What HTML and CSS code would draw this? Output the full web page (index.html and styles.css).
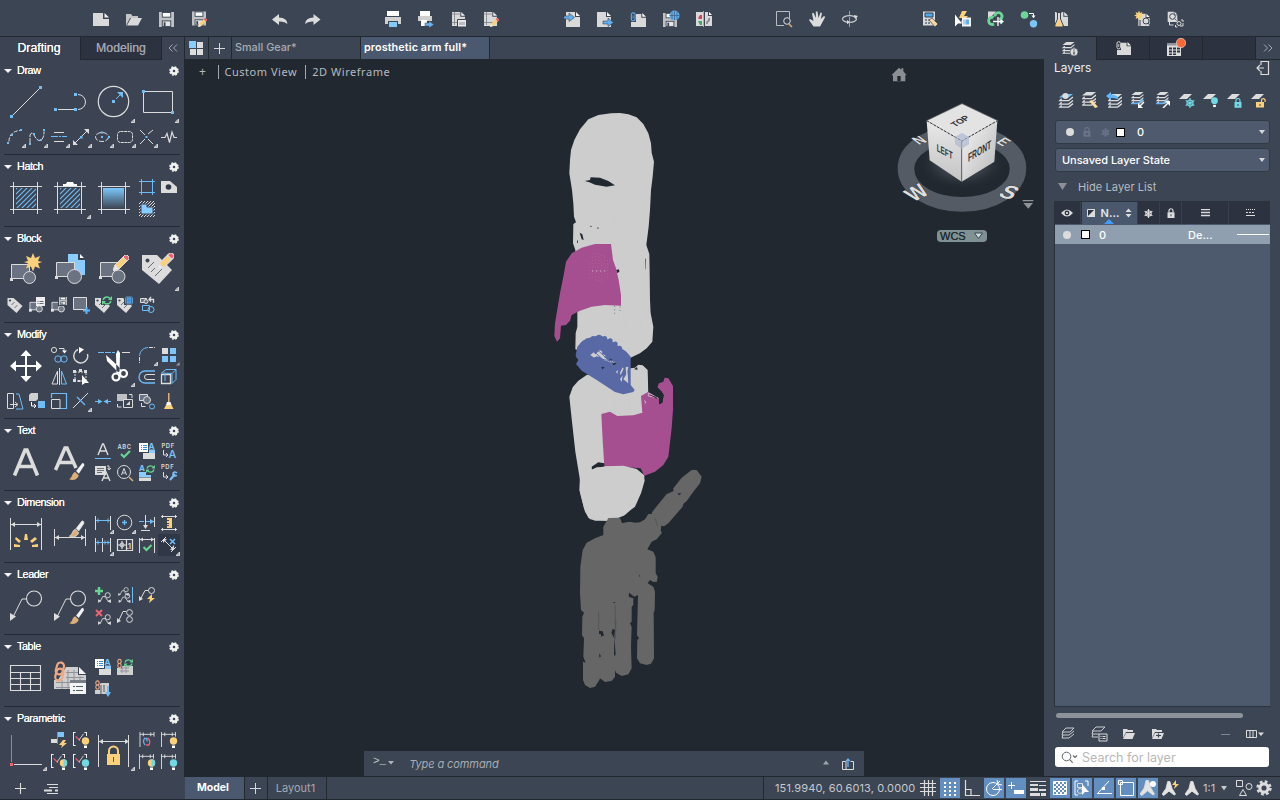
FILE: index.html
```html
<!DOCTYPE html>
<html lang="en">
<head>
<meta charset="utf-8">
<title>prosthetic arm full</title>
<link rel="stylesheet" href="styles.css">
</head>
<body>
<svg class="defs" width="0" height="0">
  <defs>
    <linearGradient id="fade" x1="0" y1="0" x2="0" y2="1"><stop offset="0" stop-color="#7cc8fc"/><stop offset="1" stop-color="#3f4857"/></linearGradient>
    <linearGradient id="faceL" x1="0" y1="0" x2="0" y2="1"><stop offset="0" stop-color="#e8e8e8"/><stop offset="1" stop-color="#c4c4c4"/></linearGradient>
    <linearGradient id="faceR" x1="0" y1="0" x2="1" y2="1"><stop offset="0" stop-color="#f4f4f4"/><stop offset="1" stop-color="#b8b8b8"/></linearGradient>
    <radialGradient id="shade"><stop offset="0" stop-color="#596069"/><stop offset=".55" stop-color="#3a414a" stop-opacity=".8"/><stop offset="1" stop-color="#212830" stop-opacity="0"/></radialGradient>
    <pattern id="hatch" width="5" height="5" patternUnits="userSpaceOnUse"><path d="M-1 6L6 -1M-1 1L1 -1M4 6L6 4" stroke="#70bdf5" stroke-width="1.1"/></pattern>
    <pattern id="dots" width="3" height="3" patternUnits="userSpaceOnUse"><path d="M0 3L3 0" stroke="#dcdcdc" stroke-width="1"/></pattern>
    <pattern id="check" width="4" height="4" patternUnits="userSpaceOnUse"><path d="M0 0h2v2h-2zM2 2h2v2h-2z" fill="#fff"/></pattern>
    <symbol id="gear" viewBox="0 0 10 10"><circle cx="5" cy="5" r="2.6" fill="none" stroke="#f2f2f2" stroke-width="2.6"/><circle cx="5" cy="5" r="4.1" fill="none" stroke="#f2f2f2" stroke-width="1.5" stroke-dasharray="1.9 1.32"/></symbol>
    <symbol id="tri" viewBox="0 0 4 4"><path d="M0 3.6h3.6V0z" fill="#9a9ea5"/></symbol>
    <symbol id="doc" viewBox="0 0 16 16"><path d="M0 2h11v4h5v10H0z" fill="#d9d9d9"/><path d="M12 1l4 4h-4z" fill="#f4f4f4"/></symbol>
    <symbol id="page" viewBox="0 0 14 16"><path d="M0 1h9v5h5v10H0z" fill="#d9d9d9"/><path d="M10 1l4 4h-4z" fill="#f4f4f4"/></symbol>
    <symbol id="floppy" viewBox="0 0 16 16"><path d="M0 0h16v16H0z" fill="#c0c1c4"/><path d="M3 0h10v6H3z" fill="#3b4554"/><path d="M4 1h8v4H4z" fill="#fff"/><path d="M3 9h10v7H3z" fill="#3b4554"/><path d="M4 10h8v5H4z" fill="#e6e6e6"/><path d="M5 11h2v4H5z" fill="#3b4554"/></symbol>
    <symbol id="pencil" viewBox="0 0 16 16"><path d="M0 16l2-6 8-8 4 4-8 8z" fill="#fbd07a"/><path d="M0 16l2-6 4 4z" fill="#e9e9e9"/><path d="M10 2l2-2h2l2 2v2l-2 2z" fill="#ee6470"/></symbol>
    <symbol id="brush" viewBox="0 0 18 20"><path d="M0 19c4-1 3-7 7-8l4 4c-2 5-7 6-11 4z" fill="#dcae78"/><path d="M8 10l7-9 2 1v2l-6 9z" fill="#f2f2f2"/></symbol>
    <symbol id="tag" viewBox="0 0 16 16"><path d="M1 1h6l9 8-6 7-9-8z" fill="#dcdcdc"/><circle cx="3.5" cy="3.5" r="1.1" fill="#3c4454"/><path d="M5 8l3-3M8 11l3-3" stroke="#6a6f78"/></symbol>
    <symbol id="block" viewBox="0 0 16 12"><path d="M1 1h9v8H1z" fill="#6b7382" stroke="#dcdcdc"/><circle cx="11" cy="8" r="3.3" fill="#737b89" stroke="#dcdcdc"/><path d="M0 8h3v3H0z" fill="#e6e6e6"/></symbol>
    <symbol id="stack" viewBox="0 0 16 16"><path d="M5 0h11l-5 4H0z"/><path d="M3 5.5L1 7.500h10l5-4M3 9.500l-2 2h10l5-4M3 13l-2 2h10l5-4" fill="none" stroke-width="1.5" stroke="#dcdcdc"/></symbol>
    <symbol id="sync" viewBox="0 0 10 9"><path d="M1 4q1-3 4-3 2 0 3 1.500M9 5q-1 3-4 3-2 0-3-1.500" fill="none" stroke="#67d490" stroke-width="1.4"/><path d="M6 4h4V0zM4 5H0v4z" fill="#67d490"/></symbol>
    <symbol id="bulbY" viewBox="0 0 8 12"><circle cx="4" cy="4" r="3.7" fill="#fbd07a"/><path d="M2.500 8.500h3v2.500h-3z" fill="#fff"/></symbol>
    <symbol id="bulbC" viewBox="0 0 8 12"><circle cx="4" cy="4" r="3.7" fill="#72d9e4"/><path d="M2.500 8.500h3v2.500h-3z" fill="#fff"/></symbol>
    <symbol id="bulbH" viewBox="0 0 8 12"><circle cx="4" cy="4" r="3.7" fill="#fbd07a"/><path d="M4 .3a3.700 3.700 0 0 1 0 7.400z" fill="#72d9e4"/><path d="M2.500 8.500h3v2.500h-3z" fill="#fff"/></symbol>
    <symbol id="dim" viewBox="0 0 16 16"><path d="M.5 0v16M15.500 0v5M.5 2.500h15M4 .5v4M12 .5v4" fill="none" stroke="#dcdcdc"/></symbol>
    <symbol id="geo" viewBox="0 0 16 16"><path d="M3 .5H.5v15H3M13 .5h2.500v4" fill="none" stroke="#f0f0f0" stroke-width="1.200"/><path d="M3 5l5 5" stroke="#ee6470" stroke-width="1.300"/><path d="M7 9l5-7" stroke="#dcdcdc"/></symbol>
    <symbol id="chain" viewBox="0 0 6 12"><rect x="1" y="1" width="4" height="5" rx="2" fill="none" stroke="#f0a882" stroke-width="1.300"/><rect x="1" y="6" width="4" height="5" rx="2" fill="none" stroke="#f0a882" stroke-width="1.300"/></symbol>
    <symbol id="lead" viewBox="0 0 32 32"><path d="M3 27L12 9h5" fill="none" stroke="#dcdcdc"/><circle cx="24" cy="8.500" r="7.500" fill="none" stroke="#dcdcdc" stroke-width="1.100"/><path d="M0 31v-8l6 3.500z" fill="#dcdcdc"/></symbol>
    <symbol id="leads" viewBox="0 0 14 12"><path d="M2 11L5 5h3M8 6l4 5" fill="none" stroke="#dcdcdc"/><circle cx="10.500" cy="3.500" r="2.800" fill="none" stroke="#dcdcdc"/><path d="M0 12V8l3 1.500zM10 10l4 2V8z" fill="#dcdcdc"/></symbol>
    <symbol id="txtlist" viewBox="0 0 16 16"><path d="M0 0h9v9H0z" fill="#fff"/><path d="M2 2.500h1m1 0h4M2 4.500h1m1 0h4M2 6.500h1m1 0h4" stroke="#3d8fdb"/><path d="M4 10h12v6H4z" fill="#dcdcdc"/><path d="M4 10h12v-3.500H10V10z" fill="#8accff"/></symbol>
    <symbol id="flake" viewBox="0 0 10 10"><path d="M5 0v10M.7 2.500l8.600 5M.7 7.500l8.600-5" stroke="currentColor" stroke-width="1.200"/><circle cx="5" cy="5" r="3" fill="none" stroke="currentColor" stroke-width="1.200"/></symbol>
    <symbol id="lock" viewBox="0 0 8 10"><path d="M2 4V2.500a2 2 0 0 1 4 0V4" fill="none" stroke="currentColor" stroke-width="1.200"/><path d="M.5 4h7v5.800h-7z" fill="currentColor"/><path d="M3.500 6h1v2h-1z" fill="#3b4554"/></symbol>
    <symbol id="folder" viewBox="0 0 14 12"><path d="M1 10V1h4l1 1h5v2H4z" fill="#dcdcdc"/><path d="M4 5h9l-2.500 6H1z" fill="#dcdcdc"/></symbol>
    <symbol id="annot" viewBox="0 0 16 16"><path d="M6.500 0h2.500l2.500 8 4 6.500-1.500 1L8 11l-6 5-2-1.500L4.500 8z" fill="#e4e4e4"/></symbol>
    <symbol id="attach" viewBox="0 0 6 12"><rect x="1" y="1" width="4.500" height="9.500" rx="2" fill="none" stroke="currentColor" stroke-width="1.300"/><path d="M3.200 4v4" stroke="currentColor"/></symbol>
  </defs>
</svg>

<div class="app">
<header class="toolbar">
  <div class="group">
    <svg viewBox="0 0 33 36"><path d="M9 13h10v6h6v7H9z" fill="#d9d9d9"/><path d="M20.500 13l4.500 4.500h-4.500z" fill="#f4f4f4"/></svg>
    <svg viewBox="0 0 33 36"><path d="M9 25V14h5l1.500 2H21v2h-8l-4 8z" fill="#c4c5c7"/><path d="M14 18h11l-4 7.500H10z" fill="#dadada"/></svg>
    <svg viewBox="0 0 33 36"><use href="#floppy" x="9" y="12" width="15" height="15"/></svg>
    <svg viewBox="0 0 33 36"><use href="#floppy" x="9" y="11" width="14" height="15"/><use href="#pencil" x="15" y="18" width="9" height="9"/></svg>
  </div>
  <div class="group">
    <svg viewBox="0 0 33 36"><path d="M9 19.500l7-5.500v3.500q8 0 8.500 6.500-3-3-8.500-2.500V25z" fill="#dcdcdc"/></svg>
    <svg viewBox="0 0 33 36"><path d="M24.500 19.500l-7-5.500v3.500q-8 0-8.500 6.500 3-3 8.500-2.500V25z" fill="#dcdcdc"/></svg>
  </div>
  <div class="group">
    <svg viewBox="0 0 33 36"><path d="M11 11h12v5H11z" fill="#fff"/><path d="M9 17h16v7H9z" fill="#d0d0d0"/><path d="M12 21h10v6H12z" fill="#3b4554"/><path d="M13 22h8v5h-8z" fill="#85c8fb"/></svg>
    <svg viewBox="0 0 33 36"><path d="M11 11h10v5H11z" fill="#fff"/><path d="M9 16h14v5H9z" fill="#cfcfcf"/><path d="M12 20h6v6h-6z" fill="#fff"/><path d="M16 23h4v-2l5 3.500-5 3.500v-2h-4z" fill="#68b3f2" stroke="#3b4554" stroke-width=".5"/></svg>
    <svg viewBox="0 0 33 36"><use href="#page" x="10" y="11" width="13" height="15"/><path d="M12.500 12v13M10 22.500h10M10 14h8" stroke="#8c9097"/><path d="M15.500 19.500h9v7.500h-9z" fill="#e7e7e7" stroke="#3b4554"/><path d="M18 22v3m2-3v3m2-3v3" stroke="#8c9097"/></svg>
    <svg viewBox="0 0 33 36"><use href="#page" x="9" y="11" width="13" height="15"/><path d="M11.500 12v13M9 22.500h10M9 14h8" stroke="#8c9097"/><use href="#pencil" x="15" y="18" width="9" height="9"/></svg>
  </div>
  <div class="group">
    <svg viewBox="0 0 33 36"><use href="#page" x="11" y="11" width="14" height="16"/><path d="M9 16h5v-3l5.500 4.500-5.500 4V19H9z" fill="#62aeee" stroke="#3b4554" stroke-width=".6"/></svg>
    <svg viewBox="0 0 33 36"><use href="#page" x="9" y="11" width="14" height="16"/><path d="M15 21h5v-3l5.500 4.500-5.500 4V24h-5z" fill="#62aeee" stroke="#3b4554" stroke-width=".6"/></svg>
    <svg viewBox="0 0 33 36"><use href="#doc" x="10" y="12" width="15" height="15"/><path d="M8 11h7v11H8z" fill="#3b4554"/><use href="#attach" x="9" y="12" width="6" height="10" color="#62aeee"/></svg>
    <svg viewBox="0 0 33 36"><use href="#floppy" x="9" y="13" width="14" height="14"/><circle cx="20.500" cy="15.500" r="5" fill="#62aeee"/><path d="M15.500 15.500h10M20.500 11v9M18 11.500v8M23 11.500v8" stroke="#3b5d80" stroke-width=".7"/></svg>
    <svg viewBox="0 0 33 36"><path d="M9 12h7v14H9zM18 12h3v4h4v10h-7z" fill="#d9d9d9"/><path d="M22 12l3 3h-3z" fill="#fff"/><path d="M11 18l2-3h2v4h-3z" fill="#d94056"/><path d="M11 21h4v4h-2z" fill="#41a965"/><path d="M16.500 11v16" stroke="#70bdf5"/><path d="M20 24c-1-4 3-1 2-6" stroke="#858991" stroke-width="1.800" fill="none"/></svg>
  </div>
  <div class="group">
    <svg viewBox="0 0 33 36"><path d="M22.500 18v-6.500h-13v14H17" fill="none" stroke="#b9bdc2"/><circle cx="20" cy="21" r="3.300" fill="none" stroke="#dcdcdc"/><path d="M22 24l3 3" stroke="#dcae78" stroke-width="1.500"/></svg>
    <svg viewBox="0 0 33 36"><path d="M13.500 26.500L9 20l1-1 3.500 2L12 13.500l1.500-.7L16 18l-.2-6.500h1.700L18.500 18l2-5.500 1.500.5-1.200 6 3.200-3 1.200 1L22 23l-2 3.500z" fill="#dcdcdc"/></svg>
    <svg viewBox="0 0 33 36"><ellipse cx="16.500" cy="19" rx="7" ry="3.300" fill="none" stroke="#c9cbce" stroke-width="1.200"/><path d="M16.500 11v4m0 2v10" stroke="#62aeee"/><path d="M21 15l4 1-3 3zM14 20l3 2.300-3 2z" fill="#dcdcdc"/></svg>
  </div>
  <div class="group">
    <svg viewBox="0 0 33 36"><path d="M9 11.500h12v14H9z" fill="#d9d9d9"/><path d="M11 13h8v4h-8z" fill="#51a9ee" stroke="#334150"/><path d="M11 20h2m1 0h2m-5 3h2m1 0h2" stroke="#626974" stroke-width="1.500"/><path d="M15 20l3-2 6 6-3 3z" fill="#f3d6a4" stroke="#3b4554" stroke-width=".7"/></svg>
    <svg viewBox="0 0 33 36"><path d="M15 11l-3 7h4l-3 6 8-8h-4l3-5z" fill="#fbd07a"/><path d="M8 14.500v12l3-3h4z" fill="#fff"/><path d="M15 17.500h9v9h-9z" fill="#f4f4f4"/><path d="M16.500 19.500h1v5h-1zM18.500 19.500H22v5h-3.500z" fill="#62aeee"/></svg>
    <svg viewBox="0 0 33 36"><path d="M8 11.500h8l-8 9z" fill="#d9d9d9"/><path d="M15 16.500a3.500 3.500 0 1 1 5.500 2.500 3.200 3.200 0 0 1 0 4.500M13.500 17.500a3.600 3.600 0 1 0 .5 6.500" stroke="#6fd596" stroke-width="2.800" fill="none"/><path d="M13 21.500h8M18 17v9" stroke="#fff" stroke-width="1.300"/><path d="M20.500 19l3.500 2.500-3.500 2.500z" fill="#fff"/></svg>
    <svg viewBox="0 0 33 36"><circle cx="11.500" cy="15" r="3.800" fill="#6fd596"/><circle cx="20.500" cy="23.800" r="3.700" fill="#7cc4fa"/><path d="M16 13.500h4.500v3" stroke="#fff" fill="none"/><path d="M18.500 15.500h4l-2 2.800z" fill="#fff"/></svg>
    <svg viewBox="0 0 33 36"><use href="#page" x="9" y="11" width="13" height="15"/><path d="M10.500 12.500h5M11.500 13v6L8.500 26h9L14.500 19v-6" fill="#d9d9d9" stroke="#3b4554"/><path d="M12 19.500h2l2.700 7H9.300z" fill="#fbd07a"/></svg>
  </div>
  <div class="group">
    <svg viewBox="0 0 33 36"><use href="#page" x="12" y="13" width="12" height="13"/><path d="M13 10.500l1 2.500 2.500-1-1 2.500 2.500 1-2.500 1 1 2.500-2.500-1-1 2.500-1-2.500-2.500 1 1-2.500-2.500-1 2.500-1-1-2.500 2.500 1z" fill="#fbd07a"/><circle cx="20" cy="21" r="3" fill="#d9d9d9" stroke="#3b4554"/><path d="M22 23l3 4M14 20v6" stroke="#3b4554"/></svg>
    <svg viewBox="0 0 33 36"><use href="#page" x="8" y="11" width="11" height="11"/><circle cx="13.500" cy="16.500" r="2.800" fill="#ddd" stroke="#3b4554"/><path d="M16 19l2 2" stroke="#3b4554"/><path d="M10.500 22v3h4M21 26h3v-3M16.500 22v-2h2M22 20h2v2M16.500 25v2h2" stroke="#dcdcdc" fill="none"/><circle cx="20" cy="23.500" r="2" fill="none" stroke="#dcdcdc"/></svg>
  </div>
</header>

<div class="main">
<aside class="palette">
  <nav class="ptabs"><span class="ptab on">Drafting</span><span class="ptab">Modeling</span><span class="fold"><svg width="12" height="10" viewBox="0 0 12 10"><path d="M5.500 1.500L2 5l3.500 3.500M10 1.500L6.500 5 10 8.500" fill="none" stroke="#a3a8b0"/></svg></span></nav>

  <section class="tools tall">
    <h3>Draw<svg class="cog"><use href="#gear"/></svg></h3>
    <div class="grid">
      <svg class="big w" viewBox="0 0 44 44"><path d="M8 36L36 8"/><path class="q" d="M6 35h3v3H6zM35 6h3v3h-3z"/></svg>
      <svg class="big w" viewBox="0 0 44 44"><path d="M10 29.500h16M30 14.500a7.500 7.500 0 0 1 0 15"/><path class="q" d="M6 28h3v3H6zM26 28h3v3h-3zM26 13h3v3h-3z"/></svg>
      <svg class="big w" viewBox="0 0 44 44"><circle cx="21.500" cy="21.500" r="15.200" stroke-width="1.200"/><path class="q" d="M20 20h3v3h-3zM31 12v6l-6-6z"/><path class="b" d="M24 19l4-4"/><use href="#tri" x="39" y="39" width="4" height="4"/></svg>
      <svg class="big w" viewBox="0 0 44 44"><path d="M7.500 11.500h29v21h-29z"/><path class="q" d="M6 10h3v3H6zM35 31h3v3h-3z"/><use href="#tri" x="39" y="39" width="4" height="4"/></svg>
      <svg class="w" viewBox="0 0 22 22"><path d="M5 15.500C5 9 9 5 16 4.500" stroke-dasharray="4 1.500"/><path class="q" d="M3 16h2v2H3zM7 8h2v2H7zM16 3h2v2h-2z"/><use href="#tri" x="18" y="18" width="4" height="4"/></svg>
      <svg class="w" viewBox="0 0 22 22"><path d="M4 17V9q2-4 4 0 3 6 6 5.500 4-1 4-9" stroke-dasharray="5 1"/><path class="q" d="M3 17h2v2H3zM7 7h2v2H7zM14 13h2v2h-2zM17 3h2v2h-2z"/><use href="#tri" x="18" y="18" width="4" height="4"/></svg>
      <svg class="w" viewBox="0 0 22 22"><path d="M6 6.500h10M6 15.500h10"/><path class="b" d="M3 10.500h7m1 0h2m1 0h5"/><use href="#tri" x="18" y="18" width="4" height="4"/></svg>
      <svg class="w" viewBox="0 0 22 22"><path d="M5 17L17 5"/><path class="f" d="M3 19v-5l5 5zM14 3h5v5z"/><path class="q" d="M10 10h2.500v2.500H10z"/><use href="#tri" x="18" y="18" width="4" height="4"/></svg>
      <svg class="w" viewBox="0 0 22 22"><ellipse cx="10" cy="11" rx="6.500" ry="4.500" stroke-dasharray="5 1.500"/><path class="q" d="M9 5.500h2v2H9zM9 10h2v2H9zM16 10h2v2h-2z"/><use href="#tri" x="18" y="18" width="4" height="4"/></svg>
      <svg class="w" viewBox="0 0 22 22"><rect x="3.500" y="5.500" width="15" height="11" rx="3" stroke-dasharray="3 .6"/><use href="#tri" x="18" y="18" width="4" height="4"/></svg>
      <svg class="w" viewBox="0 0 22 22"><path d="M4 4l5 5m3-1l5-4M9 13l-5 5m8-5l5 5"/><path class="q" d="M9.500 10h2v2h-2z"/><use href="#tri" x="18" y="18" width="4" height="4"/></svg>
      <svg class="w" viewBox="0 0 22 22"><path d="M3 11.500h4l2-4 2.500 9L14 6l2 5.500h3" stroke-width="1.200"/></svg>
    </div>
  </section>

  <section class="tools">
    <h3>Hatch<svg class="cog"><use href="#gear"/></svg></h3>
    <div class="grid">
      <svg class="big w" viewBox="0 0 44 44"><path d="M9.500 6v32M33.500 6v32M6 10.500h32M6 33.500h32"/><path d="M12 12h20v20H12z" fill="url(#hatch)" stroke="none"/></svg>
      <svg class="big w" viewBox="0 0 44 44"><path d="M9.500 6v32M33.500 6v32M6 10.500h32M6 33.500h32"/><path d="M12 12h20v20H12z" fill="url(#hatch)" stroke="none"/><path class="s" d="M15 10V8h3l1-2h6l1 2h3v2z"/><use href="#tri" x="39" y="39" width="4" height="4"/></svg>
      <svg class="big w" viewBox="0 0 44 44"><path d="M9.500 6v32M33.500 6v32M6 10.500h32M6 33.500h32"/><path d="M11 12h21v20H11z" fill="url(#fade)" stroke="none"/></svg>
      <svg class="b" viewBox="0 0 22 22"><path d="M5.500 3v16M16.500 3v16M3 5.500h16M3 16.500h16"/></svg>
      <svg class="w" viewBox="0 0 22 22"><path class="f" d="M3 5h9l7 6v6H3z"/><circle cx="10.500" cy="11" r="2.800" fill="#303847" stroke="none"/></svg>
      <svg class="w" viewBox="0 0 22 22"><path d="M3 3h16v16H3z" fill="url(#dots)" stroke="none"/><path d="M5 6h6v3h6v7H5z" fill="#8accff" stroke="#3c4454"/></svg>
    </div>
  </section>

  <section class="tools tall">
    <h3>Block<svg class="cog"><use href="#gear"/></svg></h3>
    <div class="grid">
      <svg class="big w" viewBox="0 0 44 44"><path class="g" d="M7.500 16.500h18v14h-18z"/><circle class="g" cx="25.500" cy="29.500" r="6"/><path class="f" d="M6 30h3v3H6z"/><path class="y" d="M29 5l2 5 5-2-2 5 4 1-4 1.500 2 5-5-2-2 5-2-5-5 2 2-5-4-1.500 4-1-2-5 5 2z"/></svg>
      <svg class="big w" viewBox="0 0 44 44"><path fill="#8accff" stroke="none" d="M20 6h10v6h7v15H20z"/><path class="s" d="M32 6l4 4h-4z"/><path class="g" d="M8.500 14.500h18v14h-18z"/><circle class="g" cx="26.500" cy="28.500" r="7"/><path class="f" d="M7 28h3v3H7z"/></svg>
      <svg class="big w" viewBox="0 0 44 44"><path class="g" d="M8.500 14.500h18v14h-18z"/><circle class="g" cx="26.500" cy="28.500" r="6.500"/><path class="f" d="M7 28h3v3H7z"/><use href="#pencil" x="21" y="7" width="16" height="16"/></svg>
      <svg class="big w" viewBox="0 0 44 44"><path class="f" d="M6 7h15l15 15-13 14L6 22z"/><circle cx="11.500" cy="12.500" r="2" fill="#3c4454" stroke="none"/><path d="M12 20l6-6M15 24l4-4M19 28l9-9" stroke="#666c77"/><use href="#pencil" x="21" y="5" width="17" height="17"/><use href="#tri" x="39" y="39" width="4" height="4"/></svg>
      <svg viewBox="0 0 22 22"><use href="#tag" x="2" y="3" width="17" height="16"/></svg>
      <svg viewBox="0 0 22 22"><use href="#block" x="3" y="7" width="15" height="12"/><path d="M10 3h9v9h-9z" fill="#eee"/><path d="M11.500 7.500h1m1 0h4m-6 2h1m1 0h4" stroke="#636b79"/></svg>
      <svg viewBox="0 0 22 22"><use href="#block" x="3" y="7" width="15" height="12"/><path d="M10 2h10v10H10z" fill="#3c4454"/><use href="#floppy" x="11" y="3" width="8" height="8"/></svg>
      <svg class="w" viewBox="0 0 22 22"><path class="g" d="M3.500 3.500h13v12h-13z"/><path d="M16.500 13v7M13 16.500h7" stroke="#60b5f8" stroke-width="2"/></svg>
      <svg viewBox="0 0 22 22"><use href="#tag" x="2" y="3" width="16" height="16"/><path d="M9 2h11v9H9z" fill="#3c4454"/><use href="#sync" x="10" y="2" width="10" height="9"/></svg>
      <svg viewBox="0 0 22 22"><use href="#tag" x="2" y="3" width="16" height="16"/><path d="M10 2h10v9H10z" fill="#3c4454"/><path d="M13 4h4v5h-4zM11.500 3.500v6M18.500 3.500v6M12 3h6M12 10h6" fill="#3d8fdb" stroke="#62aeee" stroke-width=".8"/></svg>
      <svg class="w" viewBox="0 0 22 22"><path class="g" d="M4.500 4.500h6v4h-6z"/><circle class="g" cx="10" cy="7.500" r="2"/><path d="M13 5.500h4.500V9M15 3l-2 2.500 2 2" stroke-width="1.300"/><path class="b" d="M6.500 11.500h7v5h-7z"/><circle class="b" cx="15" cy="15.500" r="3"/></svg>
    </div>
  </section>

  <section class="tools tall">
    <h3>Modify<svg class="cog"><use href="#gear"/></svg></h3>
    <div class="grid">
      <svg class="big w" viewBox="0 0 44 44"><path d="M22 10v24M10 22h24" stroke="#fff" stroke-width="2"/><path class="s" d="M22 6l5.500 6h-11zM22 38l5.500-6h-11zM6 22l6-5.500v11zM38 22l-6-5.500v11z"/></svg>
      <svg class="w" viewBox="0 0 22 22"><circle cx="6" cy="6" r="2.600"/><path d="M11 4.500h5v3"/><path class="s" d="M14 6.500h5l-2.500 3z"/><circle class="b" cx="10" cy="15" r="3.200"/><circle class="b" cx="16" cy="15" r="3.200"/></svg>
      <svg class="w" viewBox="0 0 22 22"><path d="M8 5.500A7 7 0 1 0 17.500 10" stroke-width="1.400"/><path class="s" d="M9 3l5 2.500-5 4z"/></svg>
      <svg class="big w" viewBox="0 0 44 44"><path class="b" d="M6 8.500h6m1 0h6m1 0h3"/><path d="M30 8.500h8"/><path class="s" d="M14 11l1 6 11 11 4-1-5-6zM24 10l2-4 2 3-.5 20-3 1z"/><circle cx="24" cy="33" r="3.500" stroke="#fff" stroke-width="2.200"/><circle cx="31.500" cy="29.500" r="3.500" stroke="#fff" stroke-width="2.200"/><use href="#tri" x="39" y="39" width="4" height="4"/></svg>
      <svg class="w" viewBox="0 0 22 22"><path class="b" d="M3.500 12C4 7 7 4 12 3.500"/><path d="M3.500 13v6M13 3.500h6" stroke-dasharray="4 1"/><use href="#tri" x="18" y="18" width="4" height="4"/></svg>
      <svg viewBox="0 0 22 22"><path d="M4 4h6v6H4z" fill="#dcdcdc"/><path d="M12 4h6v6h-6zM4 12h6v6H4zM12 12h6v6h-6z" fill="#7cc4fa"/><use href="#tri" x="18" y="18" width="4" height="4"/></svg>
      <svg class="w" viewBox="0 0 22 22"><path d="M9.500 5v13H4zM11.500 2v17" /><path class="b" d="M13.500 5v13h5z"/></svg>
      <svg class="w" viewBox="0 0 22 22"><path d="M5 6h11v9H5z" stroke-dasharray="2 1"/><path class="f" d="M3 4h3v3H3zM9 3h3v3H9zM14 4h3v3h-3zM3 13h3v3H3zM8 14h2v2H8z"/><path class="s" d="M12 9v10l3-2h4z"/></svg>
      <svg class="b" viewBox="0 0 22 22"><path d="M19 5H9a6 6 0 0 0 0 12h10" stroke-width="1.300"/><path stroke="#dcdcdc" d="M19 8.500h-8a2.500 2.500 0 0 0 0 5h8"/></svg>
      <svg class="b" viewBox="0 0 22 22"><path stroke="#dcdcdc" stroke-width="1.300" d="M3.500 8.500h9v9h-9z"/><path d="M3.500 7L8 3.500h10L14 7.500zM14 7.500v10l4-4v-10M7 15V8"/></svg>
      <svg class="w" viewBox="0 0 22 22"><path d="M3.500 3.500h6v15h-6zM6 14.500h7M11 12l3 2.500-3 2.500"/><path class="b" d="M12 4h3l4 15h-7"/></svg>
      <svg viewBox="0 0 22 22"><path d="M3 5l2-2h7v6l-2 2H3z" fill="#d0d0d0"/><path d="M5.500 12v4h4M8 14l2 2-2 2" stroke="#fff" fill="none"/><path d="M12 11h7v7h-7z" fill="#70bdf5"/></svg>
      <svg class="b" viewBox="0 0 22 22"><path stroke-width="1.200" d="M3.500 8V3.500h15v15H12"/><path stroke="#dcdcdc" d="M3.500 9.500h8.500v9H3.500z"/></svg>
      <svg class="w" viewBox="0 0 22 22"><path d="M3 18L18 3"/><path class="b" d="M7 7l8 8" stroke-width="1.300"/><use href="#tri" x="18" y="18" width="4" height="4"/></svg>
      <svg class="b" viewBox="0 0 22 22"><path d="M3 11.500h4M14 11.500h5"/><path class="q" d="M6 9l4.500 2.500L6 14zM16 9l-4.500 2.500L16 14z"/></svg>
      <svg class="w" viewBox="0 0 22 22"><path d="M3 4h10v7H3z" fill="#c0c1c4" stroke="none"/><path d="M9.500 9.500h9v8h-9z" fill="#3c4454"/><path d="M15 4.500h3V8M3.500 14v3h4"/><path class="f" d="M12 15l4-4v4z"/></svg>
      <svg class="w" viewBox="0 0 22 22"><path class="g" d="M3.500 4.500h8v6h-8z"/><circle class="g" cx="11" cy="10" r="3.500"/><path d="M5.500 13v3.500h4"/><circle class="b" cx="16" cy="16.500" r="2.500"/></svg>
      <svg viewBox="0 0 22 22"><path d="M10 3h1.500v9H10z" fill="#dcae78"/><path d="M9 12h3.500l1 3h-5.500z" fill="#f4f4f4"/><path d="M8 15h5.500l2 4h-9.500z" fill="#fbd07a"/></svg>
    </div>
  </section>

  <section class="tools">
    <h3>Text<svg class="cog"><use href="#gear"/></svg></h3>
    <div class="grid">
      <svg class="big" viewBox="0 0 44 44"><path d="M10.500 35.500L21 10h2l10.500 25.500M14 26.500h16" fill="none" stroke="#dcdcdc" stroke-width="3.600"/></svg>
      <svg class="big" viewBox="0 0 44 44"><path d="M7.500 30L17 8h2l9 20M11.500 22.500h14" fill="none" stroke="#dcdcdc" stroke-width="3.500"/><use href="#brush" x="19" y="22" width="20" height="18"/></svg>
      <svg class="w" viewBox="0 0 22 22"><path d="M6 15L10.500 4h1L16 15M7.500 11h7" stroke-width="1.400"/><path class="b" d="M3 18.500h16"/></svg>
      <svg class="w" viewBox="0 0 22 22"><text x="3.500" y="8.500" class="mini">ABC</text><path d="M7 14l3 3 6-6" stroke="#67d490" stroke-width="2.200"/></svg>
      <svg viewBox="0 0 22 22"><use href="#txtlist" x="3" y="3" width="16" height="16"/><text x="12.500" y="9" class="ab">A</text></svg>
      <svg class="w" viewBox="0 0 22 22"><text x="3.500" y="7.500" class="mini">PDF</text><path d="M5.500 10v5h4M8 13l2 2-2 2"/><text x="10.500" y="18" class="ab lg">A</text></svg>
      <svg class="w" viewBox="0 0 22 22"><path class="f" d="M3 4h11v9H3z"/><path d="M5 6.500h7M5 8.500h7M5 10.500h5" stroke="#6a6f78"/><path d="M15 4h2v3M15.500 6l1.500 2 2-2"/><path d="M10 19l4-9 4 9M11.500 16h5" stroke-width="1.400"/></svg>
      <svg class="w" viewBox="0 0 22 22"><circle cx="10" cy="10" r="6.500"/><path d="M7.500 13L10 6.500 12.500 13M8.500 11h3"/><path d="M15 15l4 4" stroke="#dcae78" stroke-width="1.600"/></svg>
      <svg viewBox="0 0 22 22"><text x="3" y="9" class="ab">A</text><use href="#sync" x="10" y="3" width="9" height="8"/><path d="M3 10h7v3h5v2H3z" fill="#8accff"/><path d="M3 15.500h12v3.500H3z" fill="#dcdcdc"/></svg>
      <svg class="w" viewBox="0 0 22 22"><text x="3" y="7" class="mini">PDF</text><path d="M5.500 10v5h4M8 13l2 2-2 2"/><path d="M12 18l5-6" stroke="#7cc4fa" stroke-width="2"/><circle cx="17" cy="12" r="2" stroke="#7cc4fa" stroke-width="1.500" stroke-dasharray="9.500 3" stroke-dashoffset="-1"/></svg>
    </div>
  </section>

  <section class="tools">
    <h3>Dimension<svg class="cog"><use href="#gear"/></svg></h3>
    <div class="grid">
      <svg class="big w" viewBox="0 0 44 44"><path d="M6.500 6v32M37.500 6v32M7 12.500h30"/><path class="f" d="M7 12.500l4-2.500v5zM37 12.500l-4-2.500v5z"/><path class="y" d="M21 22h2l1 6h-4zM12 25l5 4-2 2-4-4zM31 25l-5 4 2 2 5-4zM10 32l6 1v2h-6zM34 32l-6 1v2h6z"/></svg>
      <svg class="big w" viewBox="0 0 44 44"><path d="M6.500 17v17M37.500 17v17M7 25.500h30"/><path class="f" d="M7 25.500l4-2.500v5zM37 25.500l-4-2.500v5z"/><use href="#brush" x="19" y="8" width="20" height="17"/></svg>
      <svg class="w" viewBox="0 0 22 22"><path d="M3.500 4v14M18.500 4v14"/><path class="b" d="M4 8.500h14M6 6.500v4M16 6.500v4"/><use href="#tri" x="18" y="18" width="4" height="4"/></svg>
      <svg class="w" viewBox="0 0 22 22"><circle cx="10.500" cy="10.500" r="7.300"/><path class="b" d="M8 10.500h5M10.500 8v5" stroke-width="1.400"/><use href="#tri" x="18" y="18" width="4" height="4"/></svg>
      <svg class="w" viewBox="0 0 22 22"><path d="M9.500 3v13M5 18.500h9M18.500 5v10"/><path class="f" d="M7 13h5l-2.500 4z"/><path class="b" d="M3 9.500h5m2 0h8"/><path class="q" d="M14 7l4 2.500-4 2.500z"/></svg>
      <svg class="w" viewBox="0 0 22 22"><path d="M3 4.500h16M3 17.500h16M4.500 3v3M17.500 3v3M4.500 16v3M17.500 16v3"/><path class="y" d="M9 6h5v10H9v-2h2v-1H9v-1h2v-1H9V9h2V8H9z"/></svg>
      <svg class="w" viewBox="0 0 22 22"><path d="M3.500 4v14M18.500 4v14M10.500 4v14"/><path class="b" d="M4 8.500h14M6 6.500v4M13 6.500v4M16 6.500v4"/><use href="#tri" x="18" y="18" width="4" height="4"/></svg>
      <svg class="w" viewBox="0 0 22 22"><path d="M3.500 5.500h15v11h-15zM12.500 5v12M4 11h8M8 7v8" stroke-width="1.200"/><circle cx="8" cy="11" r="2"/><text x="12.500" y="14.500" class="mini n">.1</text></svg>
      <svg class="w" viewBox="0 0 22 22"><path d="M3.500 4v15M18.500 4v15M4 5.500h14"/><path class="f" d="M4 5.500l3-2v4zM18 5.500l-3-2v4z"/><path d="M7.500 13l3 3 5-5" stroke="#67d490" stroke-width="2"/></svg>
      <svg class="w" viewBox="0 0 22 22"><path d="M0 0h22v22H0z" fill="#303746" stroke="none"/><path d="M3 8l5-5M13 18l5-5M6 6l9 9"/><path class="f" d="M5 5h4l-4 4zM16 11v5h-4z"/><path class="b" d="M12 5l5 5M17 5l-5 5" stroke-width="1.600"/><use href="#tri" x="18" y="18" width="4" height="4"/></svg>
    </div>
  </section>

  <section class="tools">
    <h3>Leader<svg class="cog"><use href="#gear"/></svg></h3>
    <div class="grid">
      <svg class="big" viewBox="0 0 44 44"><use href="#lead" x="6" y="6" width="32" height="32"/></svg>
      <svg class="big" viewBox="0 0 44 44"><use href="#lead" x="6" y="6" width="32" height="32"/><use href="#brush" x="19" y="23" width="20" height="17"/></svg>
      <svg viewBox="0 0 22 22"><path d="M3 7h8M7 3v8" stroke="#67d490" stroke-width="2.400"/><use href="#leads" x="6" y="8" width="13" height="11"/></svg>
      <svg viewBox="0 0 22 22"><use href="#leads" x="3" y="3" width="13" height="9"/><use href="#leads" x="4" y="9" width="13" height="10"/><path d="M18.500 3v16" stroke="#70bdf5"/></svg>
      <svg class="w" viewBox="0 0 22 22"><path d="M5 14L9 6.500h3"/><path class="f" d="M3 17v-5l4 3z"/><circle cx="15.500" cy="6.500" r="3"/><path d="M16 10l-5 5h3l-1 4 6-5h-3z" fill="#fbd07a" stroke="none"/></svg>
      <span></span>
      <svg viewBox="0 0 22 22"><path d="M4 4l6 6M10 4l-6 6" stroke="#ee6470" stroke-width="2"/><use href="#leads" x="6" y="8" width="13" height="11"/></svg>
      <svg class="w" viewBox="0 0 22 22"><path d="M5 14L9 5.500h3"/><path class="f" d="M3 17v-5l4 3z"/><circle cx="15.500" cy="6.500" r="2.900"/><circle cx="15.500" cy="13.500" r="2.900"/></svg>
    </div>
  </section>

  <section class="tools">
    <h3>Table<svg class="cog"><use href="#gear"/></svg></h3>
    <div class="grid">
      <svg class="big w" viewBox="0 0 44 44"><path d="M6.500 9.500h30v25h-30zM6 16.500h31M6 22.500h31M6 28.500h31M16.500 16v18M26.500 16v18" stroke-width="1.100"/></svg>
      <svg class="big" viewBox="0 0 44 44"><path d="M6 24h4l8-13h12v8h8v14H6z" fill="#cfcfcf"/><path d="M31 11l7 7h-7z" fill="#f4f4f4"/><path d="M8 26.500h28M8 31.500h28M18 16.500h12M18 21.500h18M14 24v9M20 14v19M26 14v12M32 20v6" stroke="#8f9399"/><rect x="8.500" y="6.500" width="7" height="12" rx="3.500" fill="none" stroke="#f0a882" stroke-width="2.200" transform="rotate(15 12 12)"/><rect x="8" y="12.500" width="7" height="12" rx="3.500" fill="none" stroke="#f0a882" stroke-width="2.200" transform="rotate(15 11 18)"/><path d="M22 24h16v14H22z" fill="#f4f4f4"/><path d="M22 24h16v3H22z" fill="#777c85"/><path d="M25 30.500h2m1 0h7M25 34.500h2m1 0h7" stroke="#515a68"/></svg>
      <svg viewBox="0 0 22 22"><use href="#txtlist" x="3" y="3" width="16" height="16"/><text x="12.500" y="9" class="ab">A</text></svg>
      <svg viewBox="0 0 22 22"><path d="M3 10h16v9H3z" fill="#cfcfcf"/><path d="M6 12h9M6 15h9M8 10v7M12 10v7" stroke="#8f9399"/><path d="M3 3h5v9H3z" fill="#3c4454"/><use href="#chain" x="3" y="2" width="5" height="11"/><use href="#sync" x="10" y="3" width="9" height="8"/></svg>
      <span></span><span></span>
      <svg viewBox="0 0 22 22"><path d="M3 10l6-5h8v11H3z" fill="#cfcfcf"/><path d="M9 7v9M12 7v7" stroke="#8f9399" stroke-width="2"/><path d="M2 2h6v10H2z" fill="#3c4454"/><use href="#chain" x="3" y="2" width="5" height="10"/><path d="M15 8h2v6h2l-3 5-3-5h2z" fill="#70bdf5"/></svg>
    </div>
  </section>

  <section class="tools last">
    <h3>Parametric<svg class="cog"><use href="#gear"/></svg></h3>
    <div class="grid">
      <svg class="big w" viewBox="0 0 44 44"><path d="M7.500 7v27" stroke="#e8646e"/><path d="M6 35h3v3H6z" fill="#ee6470" stroke="none"/><path d="M10 36.500h28"/><use href="#tri" x="39" y="39" width="4" height="4"/></svg>
      <svg viewBox="0 0 22 22"><path d="M3 11h6v4H3z" fill="#dcdcdc"/><path d="M10 4h6v5h-6z" fill="#7cc4fa"/><path d="M9.500 4v12" stroke="#ee6470"/><path d="M15 12l-4 5h3l-1 3 6-5h-3l2-3z" fill="#fbd07a"/></svg>
      <svg viewBox="0 0 22 22"><use href="#geo" x="3" y="4" width="14" height="14"/><use href="#bulbY" x="11" y="9" width="9" height="12"/></svg>
      <svg class="big w" viewBox="0 0 44 44"><path d="M6.500 7v32M36.500 7v32M7 13.500h30"/><path class="f" d="M7 13.500l4-2.500v5zM37 13.500l-4-2.500v5z"/><path d="M17 26v-3a4.500 4.500 0 0 1 9 0v3" stroke="#fbd07a" stroke-width="2"/><path class="y" d="M15 26h13v11H15z"/><path d="M21.500 29v5" stroke="#6b5a30"/><use href="#tri" x="39" y="39" width="4" height="4"/></svg>
      <svg viewBox="0 0 22 22"><use href="#dim" x="3" y="4" width="16" height="15"/><path d="M9 17q-3-4 0-7M8 10.500h3v3" fill="none" stroke="#62aeee" stroke-width="1.300"/><path d="M12 10q3 3 1 7h-3" stroke="#ee6470" stroke-width="1.300" fill="none"/></svg>
      <svg viewBox="0 0 22 22"><use href="#dim" x="3" y="4" width="15" height="15"/><use href="#bulbY" x="11" y="9" width="9" height="12"/></svg>
      <svg viewBox="0 0 22 22"><use href="#geo" x="3" y="4" width="14" height="14"/><use href="#bulbH" x="11" y="9" width="9" height="12"/></svg>
      <svg viewBox="0 0 22 22"><use href="#geo" x="3" y="4" width="14" height="14"/><use href="#bulbC" x="11" y="9" width="9" height="12"/></svg>
      <svg viewBox="0 0 22 22"><use href="#dim" x="3" y="4" width="15" height="15"/><use href="#bulbH" x="11" y="9" width="9" height="12"/></svg>
      <svg viewBox="0 0 22 22"><use href="#dim" x="3" y="4" width="15" height="15"/><use href="#bulbC" x="11" y="9" width="9" height="12"/></svg>
    </div>
  </section>
  <footer class="pfoot"><svg width="60" height="24" viewBox="0 0 60 24"><path d="M5 13.500h11M10.500 8v11M37 9.500h11M37 18.500h11M39 12.500h9" fill="none" stroke="#dcdcdc" stroke-width="1.100"/><path d="M34 15.500h8m3 0h3" stroke="#dcdcdc" stroke-width="1.800"/></svg></footer>
</aside>

<div class="work">
  <div class="upper">
    <div class="center">
      <nav class="files">
        <span class="cell"><svg width="15" height="15" viewBox="0 0 15 15"><path d="M0 0h7v7H0z" fill="#8accff"/><path d="M8 1h6v6H8zM1 8h6v6H1zM8 8h6v6H8z" fill="#dcdcdc"/></svg></span>
        <span class="cell"><svg width="12" height="12" viewBox="0 0 12 12"><path d="M0 6.500h11M5.500 1v11" stroke="#d5d7da"/></svg></span>
        <span class="file">Small Gear*</span><span class="file on">prosthetic arm full*</span><span class="rest"></span>
      </nav>
      <div class="view">
        <div class="vlabel"><span class="plus">+</span><i></i><span>Custom View</span><i></i><span>2D Wireframe</span></div>
        <svg class="scene" viewBox="185 60 858 716">
          <g transform="translate(540 100) scale(.33333)">
            <path fill="#cdcdcd" d="M213 40L240 39 265 43 290 52 310 72 325 100 333 130 335 158 342 185 338 230 333 270 330 330 326 380 319 435 328 462 329 520 330 600 332 640 340 680 337 725 320 745 300 760 262 778 180 775 106 748 107 700 112 680 112 620 106 450 99 430 100 372 108 367 102 350 100 310 96 270 88 220 90 180 93 150 103 120 120 88 145 58 175 45z"/>
            <path fill="#212830" d="M134 243L150 240 152 232 180 233 205 243 225 256 200 260 165 254 148 247z"/>
            <path fill="#212830" d="M119 398L127 403 131 420 125 418zM111 420l3 3v6h-2zM151 377l5 2-4 3zM172 382l5 2-4 3zM315 475l2 3v30h-1zM228 510l9-2 1 8-7 3z"/>
            <path stroke="#b4b4b4" stroke-dasharray="2 9" fill="none" d="M215 345v40M225 340v45M239 345v40M263 335v50M216 240v60M235 640v40M302 655v30M160 292l10 8M250 640l12 50"/>
            <path stroke="#59545a" stroke-dasharray="3 7" stroke-width="2" fill="none" d="M224 618v30M240 620v14M332 620v20"/>
            <path fill="#cdcdcd" d="M88 890L98 862 115 842 140 825 272 805 285 803 295 794 308 796 323 810 325 880 330 950 250 965 250 1100 313 1127 305 1170 285 1215 255 1245 215 1262 165 1262 145 1253 132 1225 120 1175 120 1140 106 1055 96 965z"/>
            <path fill="#a54f90" d="M213 432L219 480 228 505 236 540 243 585 243 617 195 615 155 620 120 632 95 645 90 662 78 675 63 677 60 715 51 725 43 708 45 670 60 580 72 520 78 485 95 460 125 443 165 432z"/>
            <path fill="none" stroke="#b8709f" stroke-width="2" stroke-dasharray="3 7" d="M157 460v80M167 458v90M176 460v90M185 465v85M193 470v70M203 480v60M150 490v50"/>
            <path fill="none" stroke="#ddd" stroke-width="2" stroke-dasharray="4 8" d="M156 513h42"/>
            <path fill="#5869a6" d="M107 765L112 740 128 722 145 714 160 710 180 705 221 728 259 755 272 770 272 855 284 870 280 876 250 883 225 876 170 840 125 812 108 792 115 780 108 770z"/>
            <path fill="none" stroke="#5869a6" stroke-width="15" stroke-linecap="round" stroke-dasharray="0 18" d="M116 765L120 742 135 725 160 715 180 711 200 717 218 726 235 740 248 757 262 776"/>
            <path fill="#cdcdcd" d="M151 765l10-8 5 6 14-13 8 6-4 4 14 8-6 3 14 10 10 2 10 6-8 2-14-7-12-3-12-10-10-2-8 4zM228 815l6-5-2 12zM240 818l8-16 3 4-9 20zM257 802l8-2-6 30zM250 838l13-22 2 34zM240 838l8-12-3 20z"/>
            <path fill="#212830" d="M208 775l10 5-10 2zM214 787l16 3-9 6zM184 800l10 2-7 6zM282 808l9-7 2 8z"/>
            <path stroke="#5869a6" fill="none" stroke-width="2.500" d="M155 748l50 45M165 742l55 53M190 752l30 40M150 772l60 10"/>
          </g>
          <g transform="translate(540 360) scale(.33333)">
            <path fill="#a54f90" d="M184 162L210 155 232 168 280 166 307 158 303 108 325 95 357 115 357 133 367 128 371 105 365 95 352 82 357 70 370 65 374 53 385 55 399 78 399 150 395 205 385 290 370 315 345 335 313 347 302 325 240 320 193 320 188 240z"/>
            <path fill="none" stroke="#ddd" stroke-width="2" d="M312 122l6 4-3 5M325 99l30 15-30-6z"/>
            <path fill="#212830" d="M328 104l20 6 6 8zM155 320L175 307 193 310 194 321 170 322 156 329z"/>
            <path fill="#212830" d="M326 60l26 22 13 13 6 10-4 23-10 5v-18l-31-20z"/>
            <path fill="#cdcdcd" d="M120 350L160 327 195 319 250 317 290 327 312 345 314 362 303 400 285 440 250 467 200 482 150 478 135 455 118 390z"/>
            <path stroke="#c39abb" stroke-dasharray="1 5" d="M232 200v90M246 200v90M260 200v90M274 200v90M290 200v90" opacity=".4"/>
            <path stroke="#aaa" stroke-dasharray="1 6" d="M225 130v34M240 125v38M253 120v44M265 120v40"/>
            <path fill="#666" d="M190 525L190 500 200 483 205 474 240 473 246 490 260 487 270 485 285 488 300 487 315 478 325 462 335 462 337 455 380 402 400 394 400 385 425 353 455 330 470 330 485 350 480 370 460 395 440 423 430 432 428 440 385 490 372 499 364 497 362 512 366 518 350 538 335 545 322 568 340 575 347 592 347 640 353 650 351 665 340 666 330 660 323 670 340 680 345 695 344 750 341 758 342 895 333 911 320 915 300 910 291 895 292 840 297 835 291 825 294 705 283 710 267 698 266 710 280 715 280 735 275 740 275 785 270 790 275 800 273 860 275 925 265 943 245 948 228 938 225 930 225 950 215 963 195 966 180 955 178 960 165 980 150 984 135 975 129 960 129 905 137 908 130 890 132 835 126 825 127 770 132 758 123 750 120 700 121 620 128 570 140 548 165 535z"/>
            <path fill="#212830" d="M177 812l11 2 4 12-8 4-2-8h-5zM218 807l7 2-2 20 4 55-3 5-2-8 1-45-9-18zM178 880l5 9-5 4zM412 400h12l-6 6zM297 645l4 2-2 4zM218 726h8l-2 4z"/>
            <path stroke="#4c4f52" stroke-width="2" fill="none" d="M176 755v55M226 735v70M228 778l-2 60M345 475l8 22"/>
          </g>
          <g transform="translate(880 55) scale(.33333)">
            <path fill="#8b8e93" d="M34 61L57 38l7 6v-4h6v9l10 12h-4v18H39V61z"/><path fill="#212830" d="M52 63h10v15H52z"/>
            <ellipse cx="246" cy="340" rx="168" ry="105" fill="none" stroke="#555b64" stroke-width="50"/>
            <ellipse cx="246" cy="346" rx="142" ry="80" fill="#212830"/>
            <ellipse cx="246" cy="325" rx="135" ry="80" fill="url(#shade)"/>
            <g class="compass"><text transform="matrix(.85 -.3 .8 .6 116 270)" font-size="46">N</text><text transform="matrix(.75 .42 -.8 .5 346 262)" font-size="48">E</text><text transform="matrix(.8 -.42 .75 .7 101 442)" font-size="66">W</text><text transform="matrix(.95 .25 -.65 .75 351 424)" font-size="68">S</text></g>
            <path fill="#e3e3e3" d="M246 146L353 197 245 258 140 197z"/>
            <path fill="url(#faceL)" d="M140 197L245 258V380L149 316z"/><path fill="url(#faceR)" d="M245 258L352 197 343 320 245 380z"/>
            <path fill="none" stroke="#30343a" stroke-width="3" stroke-dasharray="8 4" d="M140 197L246 258 352 197"/><path stroke="#5d6065" stroke-width="3" d="M245 258V380"/><path stroke="#777" stroke-width="2" fill="none" d="M140 197L246 146 353 197"/>
            <path fill="#a9b6cf" opacity=".65" d="M246 233l21 13v22l-22 14-20-14v-22z"/>
            <g class="cube"><text transform="matrix(.72 -.42 .75 .5 226 217)" font-size="31">TOP</text><text transform="matrix(.66 .36 0 1.1 170 288)" font-size="29">LEFT</text><text transform="matrix(.75 -.45 0 1.3 264 321)" font-size="27">FRONT</text></g>
            <path fill="#8f9297" d="M428 435h32v4h-32zM430 444h29l-14 17z"/>
          </g>
        </svg>
        <div class="wcs">WCS<svg width="11" height="8" viewBox="0 0 11 8"><path d="M1.500 1h8L5.500 6.500z" fill="#c9dbdc" stroke="#3a4550"/></svg></div>
        <div class="cmd"><span class="prompt">&gt;_</span><svg width="7" height="5" viewBox="0 0 7 5"><path d="M0 1h6L3 4.500z" fill="#b0b4ba"/></svg><span class="hint">Type a command</span><svg class="up" width="6" height="5" viewBox="0 0 6 5"><path d="M0 4.500h6L3 .5z" fill="#a0a4ab"/></svg><svg width="14" height="14" viewBox="0 0 14 14"><path d="M4.500 4.500h-3v8h11v-8h-3M5 4v9" fill="none" stroke="#dcdcdc"/><path d="M7 10V3" stroke="#62b5fa" stroke-width="1.300"/><path d="M4.500 4L7 1l2.500 3z" fill="#62b5fa"/></svg></div>
      </div>
    </div>

    <aside class="layers">
      <nav class="ltabs">
        <span class="on"><svg width="18" height="16" viewBox="0 0 18 16"><use href="#stack" x="1" y="1" width="13" height="12" fill="#dcdcdc"/><circle cx="13" cy="11" r="4" fill="#dcdcdc" stroke="#3b4554" stroke-width=".6"/><path d="M13 8.500v1m0 1v3" stroke="#3b4554" stroke-width="1.300"/></svg></span>
        <span><svg width="18" height="16" viewBox="0 0 18 16"><use href="#doc" x="3" y="1" width="14" height="14"/><path d="M1 0h6v10H1z" fill="#2d3240"/><use href="#attach" x="2" y="1" width="5" height="9" color="#dcdcdc"/></svg></span>
        <span><svg width="20" height="20" viewBox="0 0 20 20"><path d="M1 6h14v12H1z" fill="#dcdcdc"/><path d="M1 5h14v2.500H1z" fill="#8e929a"/><path d="M3 9.500h3v2H3zM7 9.500h3v2H7zM11 9.500h3v2h-3zM3 12.500h3v2H3zM7 12.500h3v2H7zM11 12.500h3v2h-3zM3 15.500h3V17H3zM7 15.500h3V17H7z" fill="#2d3240"/><circle cx="15" cy="5" r="4.700" fill="#fa6937" stroke="#e9d9d4" stroke-width=".7"/></svg></span>
        <span></span>
        <span class="fold"><svg width="12" height="10" viewBox="0 0 12 10"><path d="M2 1.500L5.500 5 2 8.500M6.500 1.500L10 5 6.500 8.500" fill="none" stroke="#a3a8b0"/></svg></span>
      </nav>
      <div class="lbody">
        <div class="lhead"><span>Layers</span><svg width="14" height="16" viewBox="0 0 14 16"><path d="M5 5V1.500h7.500v13H5V11M1 8h7M4 5L1 8l3 3" fill="none" stroke="#dcdcdc" stroke-width="1.200"/></svg></div>
        <div class="ltools">
          <svg viewBox="0 0 16 16"><use href="#stack" x="0" y="2" width="16" height="14" fill="#70bdf5"/><circle cx="7.500" cy="4" r="3" fill="#dcdcdc"/></svg>
          <svg viewBox="0 0 16 16"><use href="#stack" x="0" y="0" width="14" height="14" fill="#dcdcdc"/><path d="M7 9l3-1 6 7-3 1z" fill="#fbd9a0"/></svg>
          <svg viewBox="0 0 16 16"><use href="#stack" x="2" y="2" width="14" height="14" fill="#dcdcdc"/><path d="M0 4l5-4v2.500q6 0 8 5-4-2-8-1.500V8z" fill="#62b5fa"/></svg>
          <svg viewBox="0 0 16 16"><use href="#stack" x="1" y="0" width="13" height="12" fill="#dcdcdc"/><path d="M1 11.500h7l5-4" fill="none" stroke="#62b5fa" stroke-width="1.500"/><path d="M14 10l-4 4" stroke="#fff" stroke-width="1.500"/><path d="M8 11v5h5z" fill="#fff"/></svg>
          <svg viewBox="0 0 16 16"><use href="#stack" x="1" y="0" width="13" height="12" fill="#dcdcdc"/><path d="M1 11.500h7l5-4" fill="none" stroke="#62b5fa" stroke-width="1.500"/><path d="M8 16l5-5" stroke="#fff" stroke-width="1.500"/><path d="M10 9h5v5z" fill="#fff"/></svg>
          <svg viewBox="0 0 16 16"><path d="M5 2h8l-5 5H0z" fill="#dcdcdc"/><use href="#flake" x="6" y="6" width="10" height="10" color="#72d9e4"/></svg>
          <svg viewBox="0 0 16 16"><path d="M5 2h8l-5 5H0z" fill="#dcdcdc"/><use href="#bulbC" x="7" y="5" width="9" height="11"/></svg>
          <svg viewBox="0 0 16 16"><path d="M5 2h8l-5 5H0z" fill="#dcdcdc"/><use href="#lock" x="7" y="6" width="8" height="10" color="#72d9e4"/></svg>
          <svg viewBox="0 0 16 16"><path d="M5 2h8l-5 5H0z" fill="#dcdcdc"/><path d="M5 10h8v5.500H5z" fill="#fbd07a"/><path d="M10.500 10V8.500a1.800 1.800 0 0 1 3.600 0V10" fill="none" stroke="#fbd07a" stroke-width="1.200"/><path d="M8.500 12h1v2h-1z" fill="#3b4554"/></svg>
        </div>
        <div class="select"><i class="dot"></i><svg class="dim" width="9" height="11"><use href="#lock" width="8" height="10"/></svg><svg class="dim" width="9" height="9"><use href="#flake" width="9" height="9"/></svg><i class="sw"></i><b>0</b><em></em></div>
        <div class="select state"><span>Unsaved Layer State</span><em></em></div>
        <div class="hide"><svg width="10" height="8" viewBox="0 0 10 8"><path d="M0 0h9L4.500 7z" fill="#8c8f94"/></svg><span>Hide Layer List</span></div>
        <div class="list">
          <div class="row head">
            <span class="c1"><svg width="12" height="8" viewBox="0 0 12 8"><path d="M0 4q6-7 12 0-6 7-12 0z" fill="#dcdcdc"/><circle cx="6" cy="4" r="2.400" fill="#2d3240"/><circle cx="6" cy="4" r="1" fill="#fff"/></svg></span>
            <span class="c2"><svg width="8" height="8" viewBox="0 0 8 8"><path d="M.5.5h7v7h-7z" fill="#2d3240" stroke="#dcdcdc"/><path d="M0 8L8 0v8z" fill="#dcdcdc"/></svg><span>N...</span><svg width="7" height="10" viewBox="0 0 7 10"><path d="M.5 4L3.500 .5l3 3.500zM.5 6h6l-3 3.500z" fill="#dcdcdc"/></svg><i></i></span>
            <span class="c3"><svg width="9" height="9" color="#dcdcdc"><use href="#flake" width="9" height="9"/></svg></span>
            <span class="c4"><svg width="9" height="11" color="#dcdcdc"><use href="#lock" width="8" height="10.500"/></svg></span>
            <span class="c5"><svg width="9" height="8" viewBox="0 0 9 8"><path d="M0 .5h9M0 3.500h9M0 6.500h9" stroke="#dcdcdc" stroke-width="1.300"/></svg></span>
            <span class="c6"><svg width="9" height="8" viewBox="0 0 9 8"><path d="M0 .5h9" stroke="#dcdcdc" stroke-dasharray="1 1"/><path d="M0 3.500h9" stroke="#dcdcdc" stroke-dasharray="2 1"/><path d="M0 6.500h9" stroke="#dcdcdc"/></svg></span>
          </div>
          <div class="row item"><i class="dot"></i><i class="sw"></i><b>0</b><b class="de">De...</b><u></u></div>
        </div>
        <div class="hbar"></div>
        <div class="lact">
          <svg width="16" height="14" viewBox="0 0 16 14"><path d="M6 1h8l-4 4H2zM3 5L2 8h7l5-4M3 8l-1 3h7l5-4" fill="none" stroke="#c9cdd0"/></svg>
          <svg width="18" height="16" viewBox="0 0 18 16"><path d="M5 1h9l-4 4H1zM2 5L1 8h7M2 8l-1 3h6" fill="none" stroke="#c9cdd0"/><path d="M8 8h8v7H8z" fill="#3b4554" stroke="#dcdcdc"/><path d="M9.500 10.500h1m1 0h3m-5 2h1m1 0h3" stroke="#dcdcdc"/></svg>
          <svg class="fo" width="14" height="12"><use href="#folder" width="14" height="12"/></svg>
          <svg width="14" height="12"><use href="#folder" width="14" height="12"/><path d="M5 7.500h5M7.500 5.500v4" stroke="#3b4554" stroke-width="1.200"/></svg>
          <svg class="minus" width="9" height="3"><path d="M0 1.500h9" stroke="#82888f"/></svg>
          <svg width="18" height="10" viewBox="0 0 18 10"><path d="M.5 1.500h10v7h-10zM4 1v8M7 1v8" fill="none" stroke="#dcdcdc"/><path d="M12 3.500h6L15 7z" fill="#dcdcdc"/></svg>
        </div>
        <div class="search"><svg width="18" height="13" viewBox="0 0 18 13"><circle cx="5.500" cy="5.500" r="4.300" fill="none" stroke="#63676c"/><path d="M8.700 8.700l3 3M12 4.500L14 6.500l2-2" fill="none" stroke="#63676c" stroke-width="1.200"/></svg><span>Search for layer</span></div>
      </div>
    </aside>
  </div>

  <footer class="status">
    <span class="stab on">Model</span><span class="stab add"><svg width="12" height="12" viewBox="0 0 12 12"><path d="M0 6.500h11M5.500 1v11" stroke="#d5d7da"/></svg></span><span class="stab lay">Layout1</span><span class="spacer"></span>
    <span class="coords">151.9940, 60.6013, 0.0000</span>
    <div class="modes w">
      <svg viewBox="0 0 20 20"><path d="M2 5.500h16M2 9.500h16M2 13.500h16M6.500 2v16M10.500 2v16M14.500 2v16" stroke-width="1.200"/></svg>
      <svg class="act" viewBox="0 0 20 20"><path d="M4 5h12M4 9h12M4 13h12M4 17h12" stroke="#fff" stroke-width="2" stroke-dasharray="2 3"/></svg>
      <svg viewBox="0 0 20 20"><path d="M3.500 2v15.500H18M4 11.500h5v6" stroke-width="1.200"/></svg>
      <svg class="act" viewBox="0 0 20 20"><circle cx="9" cy="11" r="6.500" stroke="#fff"/><path d="M9 11.500h9M8 11l8-8M13 2l1 4 4 1" stroke="#fff"/></svg>
      <svg class="act" viewBox="0 0 20 20"><path d="M5.500 4v7M2 7.500h7" stroke="#fff"/><path class="s" d="M8 12h10v4H8z"/></svg>
      <svg viewBox="0 0 20 20"><path class="f" d="M2 3h16v1H2zM2 6h8v2H2zM11 7h7v1h-7zM2 10h8v3H2zM11 11h7v2h-7zM2 15h10v3H2zM13 15h5v3h-5z"/></svg>
      <svg class="act" viewBox="0 0 20 20"><path d="M3.500 3.500h13v13h-13z" stroke="#fff"/><path d="M4 4h12v12H4z" fill="url(#check)" stroke="none"/></svg>
      <svg class="act" viewBox="0 0 20 20"><path d="M6 3H3v14h3M13 3h3v5" stroke="#fff"/><path d="M5.500 5.500h5v4h-5z"/><circle cx="8" cy="13" r="2.500"/><path class="s" d="M10 6v11l3-3h4z"/></svg>
      <svg class="act" viewBox="0 0 20 20"><path d="M3 15.500h15M4 15L15 3" stroke="#fff"/><path class="s" d="M8 9h3v3H8z"/></svg>
      <svg class="act" viewBox="0 0 20 20"><path d="M4.500 4.500h13v13h-13zM2.500 2.500h4v4h-4z" fill="#628fc0" stroke="#fff"/></svg>
      <svg class="act" viewBox="0 0 20 20"><use href="#annot" x="2" y="2" width="15" height="16"/><circle class="s" cx="15" cy="6" r="3"/></svg>
      <svg viewBox="0 0 20 20"><use href="#annot" x="2" y="3" width="14" height="15"/><path class="y" d="M16 2l-4 5h3l-1 4 5-5h-3z"/></svg>
      <svg viewBox="0 0 20 20"><use href="#annot" x="3" y="3" width="14" height="15"/></svg>
    </div>
    <span class="scale">1:1</span><svg width="7" height="5" viewBox="0 0 7 5"><path d="M0 0h6L3 4.500z" fill="#c5c8cc"/></svg>
    <svg class="shapes w" width="18" height="18" viewBox="0 0 18 18"><path d="M1.500 1.500h6v6h-6zM4.500 16.500L8 10.500l3.500 6z"/><circle cx="14" cy="7.500" r="3"/></svg>
    <svg width="16" height="16" viewBox="0 0 10 10"><circle cx="5" cy="5" r="2.600" fill="none" stroke="#dcdcdc" stroke-width="2"/><circle cx="5" cy="5" r="4" fill="none" stroke="#dcdcdc" stroke-width="1.600" stroke-dasharray="1.700 1.440"/></svg>
  </footer>
</div>
</div>
</div>
</body>
</html>
```
FILE: styles.css
```css
* { box-sizing: border-box; }
body { margin: 0; width: 1280px; height: 800px; overflow: hidden; background: #212830; color: #e4e6e8; font-family: Inter, "Liberation Sans", sans-serif; font-size: 11px; }
svg { display: block; flex: none; }
.defs { position: absolute; }
.app { display: flex; flex-direction: column; height: 800px; }

/* shared icon paint */
.w { fill: none; stroke: #dcdcdc; }
.b { fill: none; stroke: #6dbcf7; }
.q { fill: #70bdf5; stroke: none; }
.f { fill: #dcdcdc; stroke: none; }
.s { fill: #fff; stroke: none; }
.y { fill: #fbd07a; stroke: none; }
.g { fill: #6b7382; stroke: #dcdcdc; }
.mini { font: 600 5.800px Inter, sans-serif; fill: #dcdcdc; stroke: none; letter-spacing: .6px; }
.mini.n { font-size: 8px; letter-spacing: -.5px; }
.ab { font: 700 8px Inter, sans-serif; fill: #7cc4fa; stroke: none; }
.ab.lg { font-size: 11px; font-weight: 500; }

/* top toolbar */
.toolbar { height: 37px; display: flex; gap: 47px; padding-left: 84px; background: #3b4554; border-bottom: 1px solid #212830; }
.group { display: flex; }
.group:nth-child(n+6) { margin-left: 1px; }
.group:nth-child(n+7) { margin-left: 0; }
.group svg { width: 33px; height: 36px; }

.main { flex: 1; display: flex; min-height: 0; }

/* left palette */
.palette { width: 184px; display: flex; flex-direction: column; background: #3c4454; font-family: "Liberation Sans", sans-serif; }
.ptabs { height: 22px; display: flex; }
.ptab { width: 80px; height: 22px; line-height: 23px; text-align: center; font-size: 12.300px; color: #fff; padding-right: 2px; text-shadow: 0 0 .5px #fff; }
.ptab + .ptab { width: 82px; height: 23px; line-height: 22px; padding: 0; background: #2d3240; color: #a0a4ac; border: 1px solid #222831; border-width: 0 1px 1px; text-shadow: 0 0 .5px #a0a4ac; }
.ptabs .fold { width: 22px; display: flex; align-items: center; justify-content: center; }
.tools { height: 72px; flex: none; padding: 0 4px; position: relative; }
.tools.tall { height: 96px; }
.tools.last { height: 68px; }
.tools:not(.last)::after { content: ""; display: block; position: absolute; left: 4px; right: 4px; bottom: 0; height: 1px; background: #242b35; }
.tools h3 { margin: 0; height: 21px; padding: 1px 1px 0 0; display: flex; align-items: center; font-size: 10.800px; font-weight: 400; color: #fff; letter-spacing: -.42px; text-shadow: 0 0 .6px #fff; }
.tools h3::before { content: ""; border: 4.500px solid transparent; border-top-color: #f4f4f4; border-bottom: 0; margin-right: 5px; margin-top: 1px; }
.cog { width: 10px; height: 10px; margin: 1px 0 0 auto; }
.grid { display: grid; grid-template-columns: repeat(8, 22px); grid-template-rows: 22px 22px 26px; align-items: center; }
.grid svg { width: 22px; height: 22px; }
.grid .big { width: 44px; height: 44px; grid-column: span 2; grid-row: span 2; }
.pfoot { flex: 1; padding-left: 10px; border-bottom: 1px solid #222831; }

/* work area */
.work { flex: 1; display: flex; flex-direction: column; min-width: 0; }
.upper { flex: 1; display: flex; min-height: 0; }
.center { width: 860px; display: flex; flex-direction: column; }
.files { height: 23px; display: flex; gap: 1px; padding: 0 0 1px 1px; background: #212830; }
.cell { width: 23px; background: #3b4554; display: flex; align-items: center; justify-content: center; }
.cell + .cell { width: 22px; }
.file { width: 128px; background: #3b4554; color: #a9adb4; padding-left: 3px; line-height: 21px; font-size: 10.800px; font-weight: 500; letter-spacing: .02px; }
.file.on { background: #4a5970; color: #fff; font-weight: 600; letter-spacing: .1px; }
.rest { flex: 1; background: #3b4554; }
.view { flex: 1; position: relative; background: #212830; overflow: hidden; }
.vlabel { display: flex; align-items: center; height: 23px; padding-left: 15px; font: 11px "Noto Sans", sans-serif; color: #b6babf; letter-spacing: .54px; }
.vlabel i { width: 1px; height: 14px; background: #a3a7ac; margin: 0 5px 0 6px; }
.vlabel i + span + i { margin-left: 8px; margin-right: 6px; }
.vlabel .plus { font-size: 12px; margin-right: 6px; }
.scene { position: absolute; left: 1px; top: 0; width: 858px; height: 716px; }
.compass text { fill: #dedede; stroke: #15191e; stroke-width: 2px; paint-order: stroke; font-family: "Liberation Sans", sans-serif; font-weight: 700; }
.cube text { fill: #30353c; font-family: "Liberation Sans", sans-serif; font-weight: 700; }
.wcs { position: absolute; left: 753px; top: 170px; width: 50px; height: 12px; border-radius: 4px; background: #7f9192; color: #222b34; display: flex; align-items: center; justify-content: space-between; padding: 0 3px; font: 11px "Liberation Sans", sans-serif; text-shadow: 0 0 .5px #222b34; }
.cmd { position: absolute; left: 180px; bottom: 0; width: 500px; height: 25px; background: #3b4554; display: flex; align-items: center; padding: 0 9px 0 9px; color: #c3c6ca; }
.prompt { font: 11px "Liberation Mono", monospace; margin-right: 2px; margin-top: -5px; }
.cmd svg { margin-top: -2px; }
.hint { font-size: 11px; font-style: italic; margin-left: 14px; color: #a7abb2; letter-spacing: -.1px; }
.up { margin-left: auto; margin-right: 12px; }
.cmd svg:last-child { margin-top: 1px; }

/* layers panel */
.layers { width: 236px; background: #3b4554; display: flex; flex-direction: column; }
.ltabs { height: 23px; display: flex; gap: 1px; padding: 0 0 1px 0; background: #212830; }
.ltabs > span { width: 52px; background: #2d3240; display: flex; align-items: center; justify-content: center; }
.ltabs > .on { background: #3b4554; margin-bottom: -1px; }
.ltabs > .fold { flex: 1; background: #3b4554; }
.lbody { flex: 1; display: flex; flex-direction: column; padding: 0 10px 0 11px; }
.lhead { height: 15px; display: flex; align-items: center; justify-content: space-between; padding: 0; margin-left: -1px; font-size: 11.800px; color: #eceef0; letter-spacing: .05px; }
.ltools { display: flex; justify-content: space-between; height: 16px; margin: 17px 3px 12px 3px; }
.ltools svg { width: 16px; height: 16px; }
.select { height: 24px; background: #4f5a6e; border: 1px solid #2f3a42; border-radius: 3px; display: flex; align-items: center; padding: 0 4px 0 10px; margin-bottom: 4px; font-size: 11px; color: #fff; }
.select.state { padding-left: 6px; font-weight: 500; letter-spacing: -.02px; }
.select em { margin-left: auto; border: 3px solid transparent; border-top: 4px solid #d5d8db; border-bottom: 0; }
.select b { font-weight: 500; margin-left: 12px; }
.dot { width: 8px; height: 8px; border-radius: 50%; background: #dcdcdc; }
.dim { color: #697386; margin-left: 9px; }
.dim + .dim { margin-left: 9px; }
.sw { width: 9px; height: 9px; background: #fff; border: 1px solid #000; margin-left: 6px; }
.hide { height: 26px; display: flex; align-items: center; gap: 10px; padding: 0 0 5px 3px; margin-bottom: -1px; font-size: 11px; color: #b8bcc2; letter-spacing: .08px; }
.list { height: 506px; margin-left: -1px; border: 1px solid #2a323c; border-right: 0; background: #4d596c; }
.row { display: flex; align-items: center; }
.head { height: 22px; background: #2d3240; gap: 1px; }
.head > span { height: 22px; display: flex; align-items: center; justify-content: center; border-right: 1px solid #383f4d; }
.head > .c1 { width: 26px; padding-right: 1px; }
.head > .c2 { width: 56px; background: #4a586e; position: relative; justify-content: space-around; font-weight: 600; padding: 0 2px; }
.c2 i { position: absolute; left: 22px; bottom: 0; border: 5px solid transparent; border-bottom-color: #439bf7; border-top: 0; }
.c3 { width: 21px; } .c4 { width: 21px; } .c5 { width: 46px; } .c6 { flex: 1; }
.head > .c3, .head > .c5 { padding-right: 1px; }
.head > .c6 { border: 0; }
.item { height: 19px; margin-top: 1px; background: #8f9fb0; padding-left: 8px; color: #fff; }
.item b { font-weight: 500; margin-left: 9px; }
.item .sw { margin-left: 10px; }
.item .de { margin-left: 82px; }
.item u { width: 32px; height: 1px; background: #fff; margin-left: auto; margin-right: 1px; }
.hbar { width: 187px; height: 5px; border-radius: 3px; background: #8c929a; margin: 6px 0 0 1px; }
.lact { height: 32px; display: flex; align-items: center; padding: 0 6px 0 5px; gap: 15px; }
.lact .fo { margin-left: -2px; }
.minus { margin-left: auto; margin-right: 1px; }
.search { height: 20px; background: #fff; border-radius: 3px; display: flex; align-items: center; padding-left: 6px; gap: 3px; color: #b7b7b7; font-size: 12.500px; margin-right: 1px; margin-top: -3px; }

/* status bar */
.status { height: 24px; display: flex; align-items: center; background: #3b4554; border-top: 1px solid #212830; border-bottom: 1px solid #212830; padding-left: 1px; }
.stab { height: 22px; line-height: 22px; text-align: center; border-right: 1px solid #212830; }
.stab.on { width: 60px; background: #4a5970; color: #fff; font-weight: 700; font-size: 10.500px; padding-right: 3px; }
.stab.add { width: 23px; display: flex; align-items: center; justify-content: center; }
.stab.lay { width: 59px; color: #a5a9b0; padding-right: 3px; }
.spacer { width: 437px; height: 22px; border-right: 1px solid #212830; }
.coords { width: 154px; padding-left: 11px; color: #c6c9cd; white-space: nowrap; letter-spacing: .13px; }
.modes { display: flex; gap: 2px; }
.modes svg { width: 20px; height: 20px; }
.modes .act { background: #628fc0; }
.scale { color: #c6c9cd; margin: 0 2px 0 1px; width: 16px; white-space: nowrap; }
.shapes { margin-left: 7px; margin-right: 3px; }
```
